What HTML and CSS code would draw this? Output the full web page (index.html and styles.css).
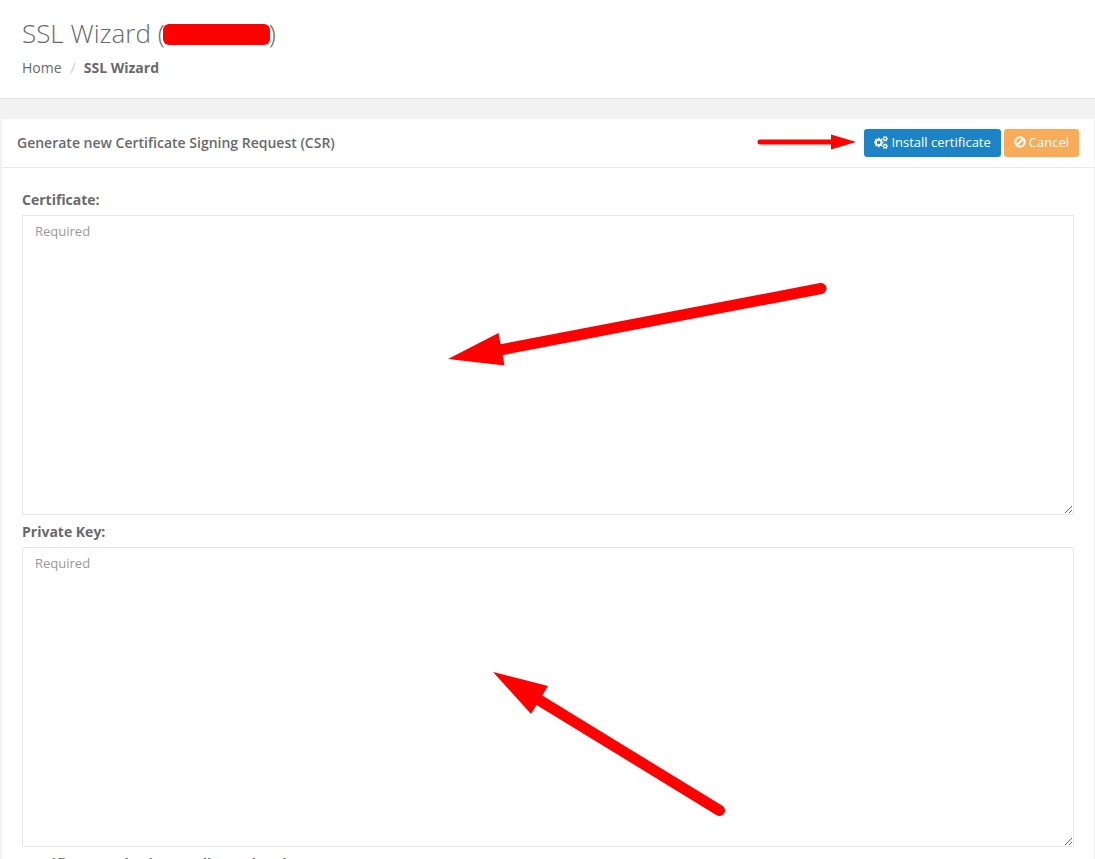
FILE: index.html
```html
<!DOCTYPE html>
<html lang="en">
<head>
    <meta charset="UTF-8">
    <meta name="viewport" content="width=device-width, initial-scale=1.0">
    <title>SSL Wizard</title>
    <link rel="stylesheet" href="styles.css">
</head>
<body>
    <header class="page-heading">
        <h2>SSL Wizard (<span class="redacted"></span>)</h2>
        <ol class="breadcrumb">
            <li><a href="#">Home</a></li>
            <li class="active"><strong>SSL Wizard</strong></li>
        </ol>
    </header>

    <form class="ibox">
        <div class="ibox-title">
            <h5>Generate new Certificate Signing Request (CSR)</h5>
            <div class="ibox-tools">
                <svg class="arrow-small" width="100" height="18" viewBox="0 0 100 18">
                    <path d="M3 9H76" stroke="#f00" stroke-width="5" stroke-linecap="round"/>
                    <path d="M74 1.500L99 9L74 16.500Z" fill="#f00"/>
                </svg>
                <button type="submit" class="btn btn-primary">
                    <svg width="14" height="13" viewBox="0 0 1920 1792" fill="#fff">
                        <path d="M896 896q0-106-75-181t-181-75-181 75-75 181 75 181 181 75 181-75 75-181zm768 512q0-52-38-90t-90-38-90 38-38 90q0 53 37.500 90.500t90.500 37.500 90.500-37.500 37.500-90.500zm0-1024q0-52-38-90t-90-38-90 38-38 90q0 53 37.500 90.500t90.500 37.500 90.500-37.500 37.500-90.500zm-384 421v185q0 10-7 19.500t-16 10.500l-155 24q-11 35-32 76 34 48 90 115 7 11 7 20 0 12-7 19-23 30-82.500 89.500t-78.500 59.500q-11 0-21-7l-115-90q-37 19-77 31-11 108-23 155-7 24-30 24h-186q-11 0-20-7.500t-10-17.500l-23-153q-34-10-75-31l-118 89q-7 7-20 7-11 0-21-8-144-133-144-160 0-9 7-19 10-14 41-53t47-61q-23-44-35-82l-152-24q-10-1-17-9.500t-7-19.500v-185q0-10 7-19.500t16-10.500l155-24q11-35 32-76-34-48-90-115-7-11-7-20 0-12 7-20 22-30 82-89t79-59q11 0 21 7l115 90q34-18 77-32 11-108 23-154 7-24 30-24h186q11 0 20 7.500t10 17.500l23 153q34 10 75 31l118-89q8-7 20-7 11 0 21 8 144 133 144 160 0 8-7 19-12 16-42 54t-45 60q23 48 34 82l152 23q10 2 17 10.500t7 19.500zm640 533v140q0 16-149 31-12 27-30 52 51 113 51 138 0 4-4 7-122 71-124 71-8 0-46-47t-52-68q-20 2-30 2t-30-2q-14 21-52 68t-46 47q-2 0-124-71-4-3-4-7 0-25 51-138-18-25-30-52-149-15-149-31v-140q0-16 149-31 13-29 30-52-51-113-51-138 0-4 4-7 4-2 35-20t59-34 30-16q8 0 46 46.500t52 67.500q20-2 30-2t30 2q51-71 92-112l6-2q4 0 124 70 4 3 4 7 0 25-51 138 17 23 30 52 149 15 149 31zm0-1024v140q0 16-149 31-12 27-30 52 51 113 51 138 0 4-4 7-122 71-124 71-8 0-46-47t-52-68q-20 2-30 2t-30-2q-14 21-52 68t-46 47q-2 0-124-71-4-3-4-7 0-25 51-138-18-25-30-52-149-15-149-31v-140q0-16 149-31 13-29 30-52-51-113-51-138 0-4 4-7 4-2 35-20t59-34 30-16q8 0 46 46.500t52 67.500q20-2 30-2t30 2q51-71 92-112l6-2q4 0 124 70 4 3 4 7 0 25-51 138 17 23 30 52 149 15 149 31z"/>
                    </svg>
                    Install certificate
                </button>
                <button type="button" class="btn btn-warning">
                    <svg width="12" height="12" viewBox="0 0 12 12" fill="none" stroke="#fff" stroke-width="2">
                        <circle cx="6" cy="6" r="4.700"/>
                        <path d="M9.300 2.700L2.700 9.300"/>
                    </svg>
                    Cancel
                </button>
            </div>
        </div>
        <div class="ibox-content">
            <div class="form-group">
                <label for="certificate">Certificate:</label>
                <textarea id="certificate" class="form-control" placeholder="Required"></textarea>
                <svg class="arrow arrow-certificate" width="380" height="84" viewBox="0 0 380 84">
                    <path d="M373 6.500L52 68" stroke="#f00" stroke-width="11" stroke-linecap="round"/>
                    <path d="M0 77L50.500 51L56.500 83.500Z" fill="#f00"/>
                </svg>
            </div>
            <div class="form-group">
                <label for="private-key">Private Key:</label>
                <textarea id="private-key" class="form-control" placeholder="Required"></textarea>
                <svg class="arrow arrow-key" width="234" height="146" viewBox="0 0 234 146">
                    <path d="M226.500 138.500L46 28" stroke="#f00" stroke-width="11" stroke-linecap="round"/>
                    <path d="M0 0L55 14L38 42Z" fill="#f00"/>
                </svg>
            </div>
            <div class="form-group">
                <label for="ca-bundle">Certificate Authority Bundle (optional):</label>
                <textarea id="ca-bundle" class="form-control"></textarea>
            </div>
        </div>
    </form>
</body>
</html>
```
FILE: styles.css
```css
* {
    box-sizing: border-box;
}
body {
    margin: 0;
    font-family: "Open Sans", Arial, sans-serif;
    font-size: 14px;
    line-height: 20px;
    color: #676a6c;
    background-color: #f2f2f2;
}
.page-heading {
    padding: 18px 22px 20px;
    background-color: #fff;
    border-bottom: 1px solid #e7e7e7;
}
.page-heading h2 {
    margin: 0 0 10px;
    font-size: 26px;
    font-weight: 300;
    line-height: 30px;
}
.redacted {
    display: inline-block;
    width: 107px;
    height: 21px;
    margin: 0 -1px 0 -2px;
    border-radius: 6px;
    vertical-align: -2px;
    background-color: #f00;
}
.breadcrumb {
    display: flex;
    margin: 0;
    padding: 0;
    list-style: none;
}
.breadcrumb a {
    color: inherit;
    text-decoration: none;
}
.breadcrumb li + li::before {
    content: "/";
    padding: 0 8px 0 9px;
    color: #ccc;
}
.ibox {
    margin: 20px 1px 0 2px;
    background-color: #fff;
}
.ibox-title {
    display: flex;
    align-items: center;
    justify-content: space-between;
    padding: 10px 15px;
    border-bottom: 1px solid #e7eaec;
}
.ibox-title h5 {
    margin: 0;
    font-size: 14px;
    font-weight: 600;
}
.ibox-tools {
    display: flex;
    align-items: center;
    gap: 3px;
}
.arrow-small {
    margin: 0 4px 2px 0;
}
.btn {
    display: flex;
    align-items: center;
    gap: 3px;
    height: 28px;
    padding: 0 10px 2px;
    border: 0;
    border-radius: 3px;
    font-family: inherit;
    font-size: 13px;
    line-height: 20px;
    color: #fff;
    cursor: pointer;
}
.btn-primary {
    background-color: #1c84c6;
}
.btn-warning {
    background-color: #f8ac59;
}
.ibox-content {
    padding: 22px 20px 20px;
}
.form-group {
    position: relative;
    margin-bottom: 7px;
}
.form-group label {
    display: block;
    margin-bottom: 5px;
    font-weight: 700;
}
.form-control {
    display: block;
    width: 100%;
    height: 300px;
    padding: 6px 12px;
    border: 1px solid #e5e6e7;
    border-radius: 1px;
    font-family: inherit;
    font-size: 13px;
    line-height: 18px;
    color: inherit;
    background-color: #fff;
}
.form-control::placeholder {
    color: #999;
}
/* Pointers drawn over the fields */
.arrow {
    position: absolute;
    pointer-events: none;
}
.arrow-certificate {
    top: 92px;
    left: 426px;
}
.arrow-key {
    top: 150px;
    left: 471px;
}
```
